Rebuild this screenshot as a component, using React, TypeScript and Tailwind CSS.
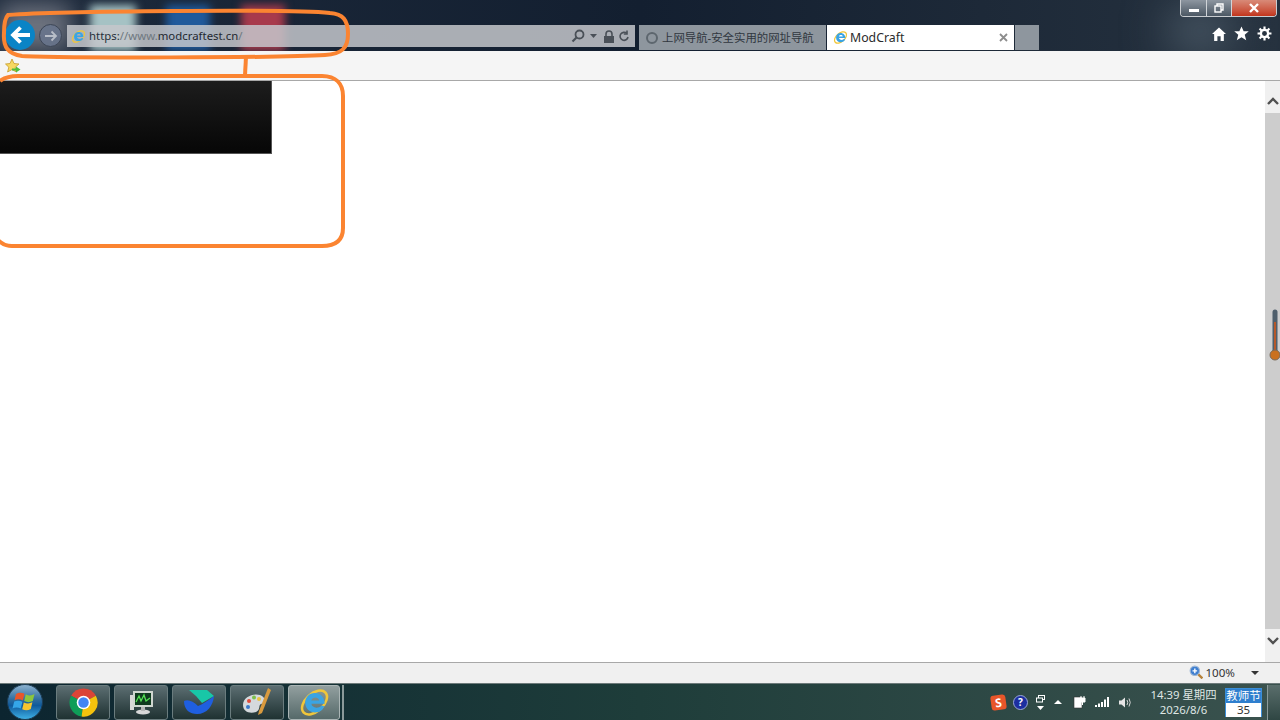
import React from "react";

const font = { fontFamily: '"Noto Sans", "Noto Sans CJK SC", sans-serif' };

function IeIcon({ size = 16 }: { size?: number }) {
  return (
    <svg width={size} height={size} viewBox="0 0 32 32" className="shrink-0 overflow-visible">
      <ellipse cx="16" cy="16" rx="17.5" ry="10.5" transform="rotate(-42 16 16)" fill="none" stroke="#f0c63a" strokeWidth="3" />
      <g transform="translate(0.6 -0.6) scale(0.98)">
        <path
          d="M16 5.5 C23 5.5 28 11 28 18.5 L12 18.5 C12.5 23.5 20 25 24.5 20.5 L27.5 21.5 C25.5 27 21 29 16.5 29 C9.5 29 4.5 24 4.5 17 C4.5 10.5 9.5 5.5 16 5.5 Z M11.8 14.5 L21.5 14.5 C20.5 9.5 13 9.5 11.8 14.5 Z"
          fill="#3aa4e4"
          fillRule="evenodd"
        />
      </g>
    </svg>
  );
}

function TaskButton({ active, w = "w-[54px]", children }: { active?: boolean; w?: string; children: React.ReactNode }) {
  return (
    <div
      className={`${w} h-[35px] shrink-0 rounded-[3px] border flex items-center justify-center ${
        active
          ? "border-[#aab5b5] bg-gradient-to-b from-[#929f9f] to-[#566a6a]"
          : "border-[#6a7c7e] bg-gradient-to-b from-[#5c6e72] to-[#1f3232]"
      }`}
    >
      {children}
    </div>
  );
}

export default function App() {
  return (
    <div className="relative w-[1280px] h-[720px] overflow-hidden flex flex-col bg-white" style={font}>
      {/* Window chrome */}
      <div className="relative h-[51px] shrink-0 overflow-hidden bg-gradient-to-r from-[#1d2a3c] via-[#131f30] to-[#26323f]">
        <div className="absolute left-[0px] top-[4px] w-[70px] h-[46px] bg-[#6f7480] blur-md" />
        <div className="absolute left-[90px] top-[5px] w-[46px] h-[46px] bg-[#a5c2c4] blur-[4px]" />
        <div className="absolute left-[166px] top-[5px] w-[44px] h-[46px] bg-[#1f5a9c] blur-[4px]" />
        <div className="absolute left-[241px] top-[5px] w-[44px] h-[46px] bg-[#a83a4c] blur-[4px]" />
        <div className="absolute left-[1170px] top-[14px] w-[60px] h-[34px] rounded-full bg-[#5f6f7c] blur-xl" />

        <div className="relative h-full flex flex-col">
          <div className="h-[18px] shrink-0 flex justify-end pr-[3px]">
            <div className="w-[97px] h-[17px] flex rounded-b-[4px] border border-t-0 border-[#c8ccd0] overflow-hidden">
              <div className="w-[26px] border-r border-[#d0d4d8] bg-gradient-to-b from-[#8d96a0] to-[#4c5864] flex items-center justify-center">
                <div className="w-[10px] h-[3px] mt-[4px] bg-white" />
              </div>
              <div className="w-[25px] border-r border-[#d0d4d8] bg-gradient-to-b from-[#8d96a0] to-[#4c5864] flex items-center justify-center">
                <svg width="10" height="10" viewBox="0 0 10 10" fill="none" stroke="white" strokeWidth="1.4">
                  <rect x="1" y="3" width="6" height="6" />
                  <path d="M3 3V1H9V7H7" />
                </svg>
              </div>
              <div className="flex-1 bg-gradient-to-b from-[#d88a78] to-[#c2331a] flex items-center justify-center">
                <svg width="12" height="10" viewBox="0 0 12 10" stroke="white" strokeWidth="2.4">
                  <path d="M2 1L10 9M10 1L2 9" />
                </svg>
              </div>
            </div>
          </div>
          <div className="flex-1 flex items-start pl-[5px] relative">
            <div className="w-[30px] h-[30px] mt-[2px] rounded-full bg-[#0a84c6] flex items-center justify-center shrink-0">
              <svg width="22" height="20" viewBox="0 0 22 20" fill="none" stroke="white" strokeWidth="3.8">
                <path d="M21 10H4M11.5 2.5L4 10L11.5 17.5" />
              </svg>
            </div>
            <div className="w-[23px] h-[23px] mt-[6px] ml-[4px] rounded-full border border-[#3d4656] bg-[#68748c]/90 flex items-center justify-center shrink-0">
              <svg width="14" height="12" viewBox="0 0 14 12" fill="none" stroke="#b8bec8" strokeWidth="1.8">
                <path d="M1 6H12M7.5 1.5L12 6L7.5 10.5" />
              </svg>
            </div>
            <div className="w-[568px] h-[22px] mt-[7px] ml-[5px] shrink-0 bg-[#c4c7cb]/85 flex items-center pl-[5px] pr-[5px] text-[11.4px] text-[#333b44]">
              <IeIcon size={13} />
              <span className="ml-[4px] whitespace-nowrap">
                <span className="text-[#27313a]">https:</span>
                <span className="text-[#6f7880]">//www.</span>
                <span className="text-[#1f2830]">modcraftest.cn</span>
                <span className="text-[#6f7880]">/</span>
              </span>
              <div className="ml-auto flex items-center gap-[5px] text-[#4a5058]">
                <svg width="14" height="14" viewBox="0 0 14 14" fill="none" stroke="#4a5058" strokeWidth="1.8">
                  <circle cx="8.5" cy="5.5" r="4" />
                  <path d="M5.5 8.5L1.5 12.5" strokeWidth="2.2" />
                </svg>
                <svg width="7" height="4" viewBox="0 0 7 4" fill="#4a5058"><path d="M0 0H7L3.5 4Z" /></svg>
                <svg width="12" height="13" viewBox="0 0 12 13" fill="#4a5058" className="ml-[1px]">
                  <rect x="1" y="6" width="10" height="7" />
                  <path d="M3 6V4a3 3 0 0 1 6 0V6" fill="none" stroke="#4a5058" strokeWidth="1.6" />
                </svg>
                <svg width="12" height="12" viewBox="0 0 12 12" fill="none" stroke="#4a5058" strokeWidth="1.6" className="-ml-[2px]">
                  <path d="M10 7a4 4 0 1 1-1.2-3.6" />
                  <path d="M9 .5V4H5.8" />
                </svg>
              </div>
            </div>
            <div className="w-[187px] h-[25px] mt-[7px] ml-[4px] shrink-0 bg-[#8e969e] flex items-center pl-[7px] text-[11.4px] text-[#30373e] whitespace-nowrap">
              <div className="w-[12px] h-[12px] rounded-full border-2 border-[#5d666e] mr-[4px] shrink-0" />
              <span>上网导航-安全实用的网址导航</span>
            </div>
            <div className="w-[187px] h-[25px] mt-[7px] ml-[1px] shrink-0 bg-white flex items-center pl-[7px] pr-[5px] text-[12.3px] text-[#2b2b2b]">
              <IeIcon size={13} />
              <span className="ml-[3px] mt-[1px]">ModCraft</span>
              <svg width="9" height="9" viewBox="0 0 9 9" stroke="#8d8d8d" strokeWidth="1.8" className="ml-auto mr-[1px]">
                <path d="M1 1L8 8M8 1L1 8" />
              </svg>
            </div>
            <div className="w-[24px] h-[25px] mt-[7px] ml-[1px] shrink-0 bg-[#8e969e]" />
            <div className="ml-auto mr-[8px] mt-[8px] flex items-center gap-[8px]">
              <svg width="14" height="14" viewBox="0 0 13 13" fill="white">
                <path d="M6.5 0.5L13 6.5H11V13H8V8.5H5V13H2V6.5H0Z" />
              </svg>
              <svg width="15" height="15" viewBox="0 0 14 14" fill="white">
                <path d="M7 0.5L9 5H13.8L10 8.2L11.4 13.4L7 10.5L2.6 13.4L4 8.2L.2 5H5Z" />
              </svg>
              <svg width="15" height="15" viewBox="0 0 14 14" fill="none" stroke="white">
                <circle cx="7" cy="7" r="3.4" strokeWidth="2.2" />
                <path d="M7 .5V3M7 11V13.5M.5 7H3M11 7H13.5M2.4 2.4L4.2 4.2M9.8 9.8L11.6 11.6M11.6 2.4L9.8 4.2M4.2 9.8L2.4 11.6" strokeWidth="2" />
              </svg>
            </div>
          </div>
        </div>
      </div>

      {/* Favorites bar */}
      <div className="h-[30px] shrink-0 bg-[#f5f5f5] border-b border-[#a8a8a8] flex items-start pl-[5px] pt-[7px]">
        <svg width="16" height="16" viewBox="0 0 16 16">
          <path d="M7 1L9 5.5L14 6L10.2 9.2L11.4 14L7 11.5L2.6 14L3.8 9.2L0.5 6L5 5.5Z" fill="#f6d860" stroke="#c79a2a" strokeWidth="0.8" />
          <path d="M7 10.5H11V8.5L15.5 11.5L11 14.5V12.5H7Z" fill="#4fbe3c" />
        </svg>
      </div>

      {/* Page */}
      <div className="flex-1 min-h-0 flex bg-white">
        <div className="flex-1 min-w-0">
          <div className="w-[272px] h-[73px] bg-gradient-to-b from-[#1d1d1d] to-[#070707] border-r border-b border-[#555555]" />
        </div>
        <div className="w-[15px] shrink-0 bg-[#f0f0f0] flex flex-col items-center">
          <div className="h-[32px] w-full flex items-center justify-center shrink-0 pt-[8px]">
            <svg width="12" height="8" viewBox="0 0 12 8" fill="none" stroke="#505050" strokeWidth="2.4">
              <path d="M1 7L6 2L11 7" />
            </svg>
          </div>
          <div className="flex-1 w-full bg-[#cdcdcd]" />
          <div className="h-[33px] w-full flex items-center justify-center shrink-0 pb-[9px]">
            <svg width="12" height="8" viewBox="0 0 12 8" fill="none" stroke="#505050" strokeWidth="2.4">
              <path d="M1 1L6 6L11 1" />
            </svg>
          </div>
        </div>
      </div>

      {/* Status bar */}
      <div className="h-[21px] shrink-0 bg-[#f0f0f0] border-t border-[#a8a8a8] flex items-center justify-end pr-[21px] text-[11.6px] text-[#333333]">
        <svg width="14" height="14" viewBox="0 0 12 12" className="mr-[2px] mb-[2px]">
          <circle cx="5" cy="5" r="4" fill="#3f7fd0" stroke="#9cb6d6" />
          <path d="M3 5H7M5 3V7" stroke="white" strokeWidth="1.2" />
          <path d="M8 8L11.5 11.5" stroke="#b5823a" strokeWidth="2" />
        </svg>
        <span>100%</span>
        <svg width="8" height="4" viewBox="0 0 8 4" fill="#333333" className="ml-[16px]">
          <path d="M0 0H8L4 4Z" />
        </svg>
      </div>

      {/* Taskbar */}
      <div className="h-[37px] shrink-0 border-t border-[#6d7a7a] bg-gradient-to-r from-[#0c2530] via-[#1e3d3a] to-[#3a524e] flex items-center pl-[7px]">
        <svg width="36" height="36" viewBox="0 0 36 36" className="shrink-0">
          <defs>
            <linearGradient id="orb" x1="0" y1="0" x2="0" y2="1">
              <stop offset="0" stopColor="#8fb4d0" />
              <stop offset="0.45" stopColor="#2a6a9e" />
              <stop offset="0.6" stopColor="#0f5a9c" />
              <stop offset="1" stopColor="#3fb2e6" />
            </linearGradient>
          </defs>
          <circle cx="18" cy="18" r="17.5" fill="url(#orb)" stroke="#1c3c54" />
          <path d="M9 10 C12 8 15 8.5 17.5 9.8 L15.8 16.5 C13.5 15.2 10.5 14.8 7.5 16.2 Z" fill="#e8562a" />
          <path d="M18.8 10.2 C21.5 11.8 24.5 11.8 27.5 10 L25.8 17 C23 18.5 20 18.5 17.2 17 Z" fill="#8cc63e" />
          <path d="M7.2 17.5 C10 16.2 13 16.5 15.4 17.8 L13.8 24.6 C11.2 23.2 8.2 23 5.5 24.4 Z" fill="#35a6e8" />
          <path d="M16.8 18.4 C19.6 19.8 22.6 19.8 25.4 18.3 L23.8 25 C21 26.6 18 26.5 15.2 25.2 Z" fill="#f7c52e" />
        </svg>
        <div className="flex items-center gap-[4px] ml-[13px]">
          <TaskButton>
            <svg width="31" height="31" viewBox="0 0 32 32">
              <path d="M16 16L3.3 9A14.5 14.5 0 0 1 28.7 9Z" fill="#db4437" />
              <path d="M16 16L3.3 9A14.5 14.5 0 0 0 14 30.4Z" fill="#0f9d58" />
              <path d="M16 16L28.7 9A14.5 14.5 0 0 1 14 30.4Z" fill="#f4c20d" />
              <circle cx="16" cy="16" r="7" fill="white" />
              <circle cx="16" cy="16" r="5.4" fill="#4285f4" />
            </svg>
          </TaskButton>
          <TaskButton>
            <svg width="28" height="28" viewBox="0 0 28 28">
              <rect x="3" y="7" width="4" height="15" fill="#d8d8d8" />
              <rect x="6" y="3" width="20" height="16" fill="#cfd6d0" />
              <rect x="8" y="5" width="16" height="12" fill="#0f3a1e" />
              <path d="M9 14L12 8L14 13L17 7L19 13L23 10" fill="none" stroke="#53e053" strokeWidth="1.3" />
              <ellipse cx="16" cy="24" rx="7" ry="2.4" fill="#d8d8d8" />
              <rect x="14" y="19" width="4" height="4" fill="#b8b8b8" />
            </svg>
          </TaskButton>
          <TaskButton>
            <svg width="32" height="28" viewBox="0 0 32 28">
              <path d="M6 2H24L31 8L19 15L13 8Z" fill="#18c7a7" />
              <path d="M1 13C5 11 10 13 15 18C20 16 26 12 31 8C30 18 24 26 14 26C7 26 1 22 1 13Z" fill="#1f5fe0" />
            </svg>
          </TaskButton>
          <TaskButton>
            <svg width="32" height="30" viewBox="0 0 32 30">
              <path d="M2 18C2 10 12 6 19 8C25 10 25 16 20 17C17 18 20 23 15 25C9 27 2 25 2 18Z" fill="#d5d9dc" />
              <circle cx="8" cy="14" r="2" fill="#e14b3b" />
              <circle cx="13" cy="10.5" r="2" fill="#7cc04b" />
              <circle cx="18" cy="12" r="2" fill="#e9c340" />
              <circle cx="7" cy="20" r="2" fill="#3a78c9" />
              <path d="M27 1L30 3L21 26L17 28L18 24Z" fill="#d99a3e" />
            </svg>
          </TaskButton>
          <TaskButton active w="w-[52px]">
            <IeIcon size={27} />
          </TaskButton>
        </div>
        <div className="w-[2px] h-[35px] ml-[2px] bg-[#8b9a9a]" />

        <div className="ml-auto flex items-center text-white">
          <div className="w-[15px] h-[15px] rounded-[3px] bg-[#e8562a] flex items-center justify-center text-[12px] font-bold leading-none rotate-[-8deg]">S</div>
          <div className="w-[15px] h-[15px] ml-[7px] rounded-full bg-[#1c2fa0] border border-[#9aa6d8] flex items-center justify-center text-[10px] font-bold leading-none">?</div>
          <div className="ml-[8px] flex flex-col items-center gap-[3px]">
            <svg width="9" height="8" viewBox="0 0 9 8" fill="none" stroke="white">
              <rect x="2.5" y=".5" width="6" height="4" />
              <rect x=".5" y="3" width="6" height="4" fill="#2c4a46" />
            </svg>
            <svg width="7" height="4" viewBox="0 0 7 4" fill="white"><path d="M0 0H7L3.5 4Z" /></svg>
          </div>
          <svg width="8" height="4" viewBox="0 0 8 4" fill="white" className="ml-[9px]"><path d="M0 4H8L4 0Z" /></svg>
          <svg width="13" height="14" viewBox="0 0 13 14" className="ml-[11px]">
            <rect x="1" y="2" width="8" height="11" fill="white" stroke="#333" strokeWidth="0.6" />
            <path d="M7 3H12V7H7ZM8 1V3M11 1V3M9.5 7V10" stroke="white" fill="white" strokeWidth="1" />
          </svg>
          <svg width="15" height="10" viewBox="0 0 15 10" fill="white" className="ml-[9px]">
            <rect x="0" y="8" width="2" height="2" />
            <rect x="3" y="6.5" width="2" height="3.5" />
            <rect x="6" y="5" width="2" height="5" />
            <rect x="9" y="2.5" width="2" height="7.5" />
            <rect x="12" y="0" width="2" height="10" />
          </svg>
          <svg width="14" height="13" viewBox="0 0 14 13" fill="none" className="ml-[8px]">
            <path d="M1 4.5H3.5L7 1.5V11.5L3.5 8.5H1Z" fill="#e6e6e6" />
            <path d="M9 4Q10.5 6.5 9 9M11 2.5Q13.5 6.5 11 10.5" stroke="#d8d8d8" />
          </svg>
          <div className="ml-[18px] w-[67px] flex flex-col items-center text-[11.4px] leading-[15px] text-[#dfe6e4] whitespace-nowrap">
            <span>14:39 星期四</span>
            <span>2026/8/6</span>
          </div>
          <div className="ml-[8px] w-[37px] h-[29px] flex flex-col text-center text-[11.5px] leading-[14px] border border-[#3a8ed8]">
            <div className="h-[15px] bg-[#2f7fce] text-white">教师节</div>
            <div className="flex-1 bg-white text-[#333333]">35</div>
          </div>
          <div className="ml-[5px] w-[13px] h-[35px] border-l border-[#8b9a9a] bg-gradient-to-b from-[#5a6e6c] to-[#2f4643]" />
        </div>
      </div>

      {/* Hand-drawn annotations over the page */}
      <svg className="absolute left-0 top-0 pointer-events-none" width="1280" height="720" fill="none">
        <path
          d="M8 15 C60 11 290 9 330 13 C343 14 348 20 348 34 C348 48 342 54 325 55 C280 58 60 58 22 56 C8 54 3 47 4 33 C4 23 5 18 8 15 Z"
          stroke="#fb8431"
          strokeWidth="4"
        />
        <path d="M246 57 L245 75" stroke="#fb8431" strokeWidth="4" />
        <path
          d="M0 81 C5 77 10 76 18 76 L322 76 C336 76 343 84 343 96 L343 228 C343 240 336 246 322 246 L12 246 C6 246 2 244 -2 240"
          stroke="#fb8431"
          strokeWidth="4"
        />
        <path d="M1275 312 L1275 352" stroke="#4f5f6c" strokeWidth="5" strokeLinecap="round" />
        <path d="M1275 322 L1275 352" stroke="#b5582a" strokeWidth="2" />
        <circle cx="1275" cy="355" r="5" fill="#c9711f" stroke="#7a6a58" />
      </svg>
    </div>
  );
}
